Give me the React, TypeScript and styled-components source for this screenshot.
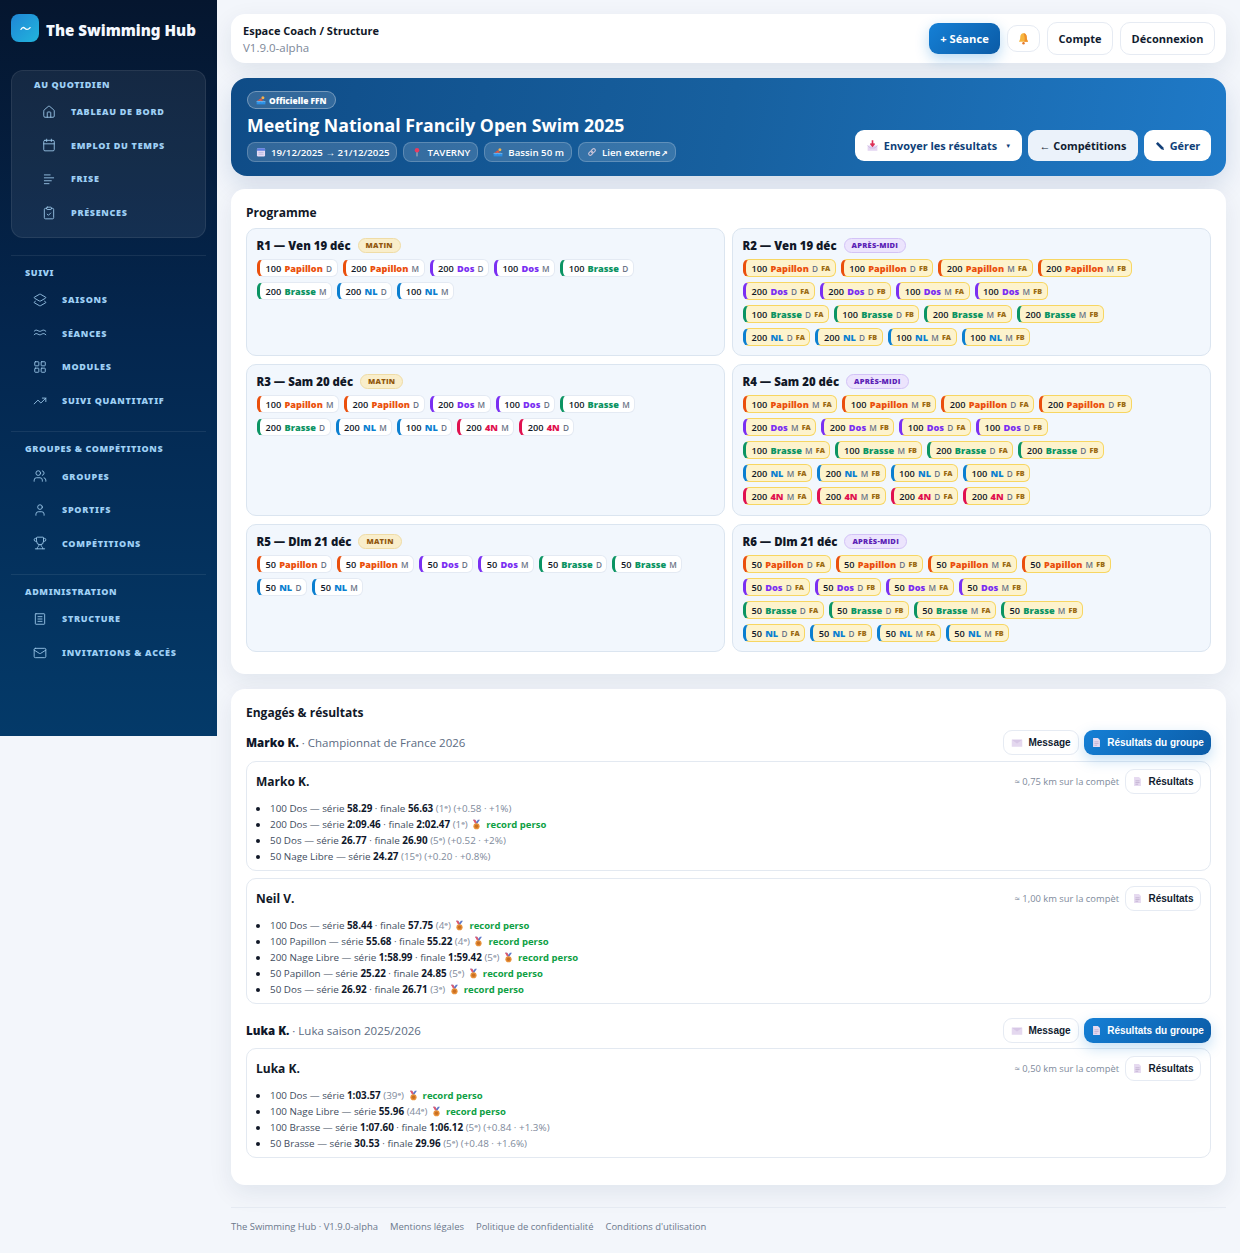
import React, { ComponentType, FC, ReactNode } from "react";
import styled, { createGlobalStyle } from "styled-components";
import {
  Home, Calendar, ClipboardCheck, Layers2, LayoutGrid, TrendingUp,
  Users, User, Trophy, Mail,
} from "lucide-react";

const GlobalStyle = createGlobalStyle`
  html, body { margin: 0; padding: 0; }
  body {
    background: #f3f6fb;
    font-family: "Open Sans", "Noto Sans", sans-serif;
    color: #0f172a;
  }
  * { box-sizing: border-box; }
`;

const strokeColours: Record<string, string> = {
  Papillon: "#ea4f0c",
  Dos: "#7a2ff2",
  Brasse: "#0b9463",
  NL: "#0b7fd0",
  "4N": "#e0114f",
};

const Page = styled.div`
  display: flex;
  align-items: flex-start;
  width: 1240px;
  height: 1253px;
  overflow: hidden;
`;

const Sidebar = styled.aside`
  width: 217px;
  height: 736px;
  flex-shrink: 0;
  padding: 14px 11px 0;
  background: linear-gradient(180deg, #05162f 0%, #04264e 45%, #043a69 100%);
`;

const Brand = styled.div`
  display: flex;
  align-items: center;
  gap: 7px;
  height: 28px;
  margin-bottom: 28px;
`;

const BrandMark = styled.div`
  width: 28px;
  height: 28px;
  border-radius: 8px;
  background: linear-gradient(135deg, #1f86d6, #22b5dc);
  display: flex;
  align-items: center;
  justify-content: center;
`;

const BrandName = styled.div`
  font-family: "Noto Sans", sans-serif;
  font-size: 15.1px;
  font-weight: 900;
  margin-top: 3px;
  color: #f4f8ff;
  white-space: nowrap;
`;

const FirstGroup = styled.div`
  height: 168px;
  padding: 7px 0 0 22px;
  border: 1px solid rgba(255, 255, 255, 0.08);
  border-radius: 12px;
  background: rgba(255, 255, 255, 0.065);
`;

const NavGroup = styled.div`
  margin-top: 17px;
  padding: 10px 0 0 14px;
  border-top: 1px solid rgba(255, 255, 255, 0.08);

  & + & {
    margin-top: 14px;
  }
`;

const NavLabel = styled.div`
  font-family: "Noto Sans", sans-serif;
  height: 14px;
  line-height: 14px;
  margin-bottom: 3px;
  font-size: 9px;
  font-weight: 900;
  letter-spacing: 0.6px;
  color: #9fd0f5;
  white-space: nowrap;
`;

const NavItem = styled.div`
  display: flex;
  align-items: center;
  height: 33.6px;
  padding-left: 7.5px;
  color: #9fd0f5;
  svg { flex-shrink: 0; }
`;

const NavIconSlot = styled.div`
  width: 29.5px;
  display: flex;
  color: #9ec9ec;
`;

const NavText = styled.span`
  font-family: "Noto Sans", sans-serif;
  font-size: 9px;
  font-weight: 900;
  letter-spacing: 0.7px;
  white-space: nowrap;
`;

const Main = styled.main`
  flex: 1;
  min-width: 0;
  padding: 14px 14px 0;
  display: flex;
  flex-direction: column;
`;

const TopBar = styled.header`
  height: 49px;
  padding: 0 11px 0 12px;
  background: #fff;
  border-radius: 14px;
  box-shadow: 0 8px 24px rgba(15, 40, 80, 0.09);
  display: flex;
  align-items: center;
  justify-content: space-between;
`;

const TopTitle = styled.div`
  font-size: 11px;
  line-height: 17px;
  font-weight: 700;
  color: #111827;
`;

const TopVersion = styled.div`
  font-size: 11.5px;
  line-height: 17px;
  color: #7c8798;
`;

const TopActions = styled.div`
  display: flex;
  align-items: center;
  gap: 7px;
`;

const PrimaryButton = styled.button`
  height: 31px;
  width: 71px;
  padding: 0;
  border: 0;
  border-radius: 9px;
  background: linear-gradient(135deg, #1580d6, #0b5ba6);
  box-shadow: 0 5px 14px rgba(21, 128, 214, 0.3);
  color: #fff;
  font: 700 11.2px "Open Sans", sans-serif;
`;

const GhostButton = styled.button<{ $w: number; $h?: number }>`
  width: ${(p) => p.$w}px;
  height: ${(p) => p.$h ?? 33}px;
  padding: 0;
  display: flex;
  align-items: center;
  justify-content: center;
  background: #fff;
  border: 1px solid #e6ebf3;
  border-radius: 10px;
  color: #111c30;
  font: 700 11px "Open Sans", sans-serif;
`;

const Hero = styled.section`
  height: 98px;
  margin-top: 15px;
  padding: 13px 15px 14px 16px;
  border-radius: 16px;
  background: linear-gradient(100deg, #0f4c87 0%, #17609f 50%, #1f7ac8 100%);
  box-shadow: 0 10px 26px rgba(15, 60, 120, 0.14);
  display: flex;
  justify-content: space-between;
  align-items: flex-end;
  color: #fff;
`;

const HeroInfo = styled.div`
  display: flex;
  flex-direction: column;
`;

const HeroBadge = styled.div`
  align-self: flex-start;
  height: 18px;
  padding: 0 8px;
  display: flex;
  align-items: center;
  gap: 3px;
  border: 1px solid rgba(255, 255, 255, 0.32);
  border-radius: 9px;
  background: rgba(255, 255, 255, 0.15);
  font-size: 8.4px;
  font-weight: 800;
`;

const HeroTitle = styled.h1`
  margin: 3px 0 4px;
  font-size: 17.7px;
  line-height: 26px;
  font-weight: 700;
  white-space: nowrap;
`;

const HeroChips = styled.div`
  display: flex;
  gap: 6px;
`;

const HeroChip = styled.div`
  height: 20px;
  padding: 0 7px 0 8px;
  display: flex;
  align-items: center;
  gap: 5px;
  border: 1px solid rgba(255, 255, 255, 0.2);
  border-radius: 8px;
  background: rgba(255, 255, 255, 0.15);
  font-size: 9.7px;
  font-weight: 600;
  white-space: nowrap;
`;

const ExternalArrow = styled.span`
  font-size: 8px;
  margin-left: -2px;
`;

const HeroActions = styled.div`
  display: flex;
  gap: 6px;
  align-items: center;
  margin-bottom: 1px;
`;

const HeroButton = styled.button<{ $w: number; $tint?: boolean; $navy?: boolean }>`
  width: ${(p) => p.$w}px;
  height: 31px;
  padding: 0;
  display: flex;
  align-items: center;
  justify-content: center;
  gap: 5px;
  border: 0;
  border-radius: 9px;
  background: ${(p) => (p.$tint ? "#ebf2fa" : "#fff")};
  color: ${(p) => (p.$navy ? "#0f3f78" : "#111c30")};
  font: 700 10.9px "Open Sans", sans-serif;
  white-space: nowrap;
`;

const Caret = styled.span`
  font-size: 6px;
  margin-left: 3px;
`;

const Card = styled.section<{ $h: number; $mt: number }>`
  height: ${(p) => p.$h}px;
  margin-top: ${(p) => p.$mt}px;
  padding: 14px 15px 0;
  background: #fff;
  border-radius: 14px;
  box-shadow: 0 8px 24px rgba(15, 40, 80, 0.08);
`;

const CardTitle = styled.h2`
  margin: 0;
  height: 20px;
  line-height: 20px;
  font-size: 12px;
  font-weight: 700;
  color: #111827;
`;

const SessionGrid = styled.div`
  margin-top: 5px;
  display: grid;
  grid-template-columns: 479px 479px;
  grid-template-rows: 128px 152px 128px;
  gap: 8px 7px;
`;

const Session = styled.div`
  padding: 8px 10px;
  background: #f2f7fd;
  border: 1px solid #dbe5f0;
  border-radius: 10px;
`;

const SessionHead = styled.div`
  display: flex;
  align-items: center;
  gap: 7px;
  height: 16px;
  margin-bottom: 6px;
`;

const SessionName = styled.div`
  font-size: 11.4px;
  font-weight: 800;
  color: #111827;
  white-space: nowrap;
  margin-left: -0.5px;
`;

const SessionTag = styled.span<{ $pm?: boolean }>`
  height: 15px;
  line-height: 13px;
  padding: 0 7px;
  border-radius: 8px;
  border: 1px solid ${(p) => (p.$pm ? "#d3c3f7" : "#efdca6")};
  background: ${(p) => (p.$pm ? "#ece4fd" : "#f9eecb")};
  color: ${(p) => (p.$pm ? "#5b21b6" : "#92580f")};
  font-size: 7.5px;
  font-weight: 800;
  letter-spacing: 0.25px;
`;

const ChipRows = styled.div`
  display: flex;
  flex-direction: column;
  gap: 5px;
`;

const ChipRow = styled.div`
  display: flex;
  gap: 5px;
`;

const Chip = styled.div<{ $colour: string; $final: boolean }>`
  height: 18px;
  padding: 0 4.5px 0 5.5px;
  display: flex;
  align-items: center;
  gap: 3.2px;
  border: 1px solid ${(p) => (p.$final ? "#f7d662" : "#e4eaf3")};
  border-left: 3px solid ${(p) => p.$colour};
  border-radius: 6px;
  background: ${(p) => (p.$final ? "#fdf3cd" : "#fff")};
  font-size: 9.2px;
  font-weight: 600;
  color: #111827;
  white-space: nowrap;
`;

const StrokeName = styled.span<{ $colour: string }>`
  color: ${(p) => p.$colour};
  font-weight: 800;
`;

const GenderMark = styled.span`
  font-size: 8.2px;
  color: #6b7486;
`;

const FinalMark = styled.span`
  font-size: 7.2px;
  font-weight: 800;
  color: #9a6a12;
`;

const GroupHead = styled.div<{ $mt: number }>`
  margin-top: ${(p) => p.$mt}px;
  height: 25px;
  display: flex;
  align-items: center;
  justify-content: space-between;
`;

const GroupTitle = styled.div`
  font-size: 11.5px;
  color: #5b6b82;
  b { color: #0f172a; font-weight: 800; }
`;

const GroupActions = styled.div`
  display: flex;
  gap: 5px;
`;

const SmallButton = styled.button<{ $w: number; $primary?: boolean }>`
  width: ${(p) => p.$w}px;
  height: 25px;
  padding: 0;
  display: flex;
  align-items: center;
  justify-content: center;
  gap: 5px;
  border: ${(p) => (p.$primary ? "0" : "1px solid #e6ebf3")};
  border-radius: 9px;
  background: ${(p) => (p.$primary ? "linear-gradient(135deg, #1580d6, #0b5ba6)" : "#fff")};
  box-shadow: ${(p) => (p.$primary ? "0 5px 14px rgba(21, 128, 214, 0.25)" : "none")};
  color: ${(p) => (p.$primary ? "#fff" : "#111c30")};
  font: 700 10px "Liberation Sans", "Open Sans", sans-serif;
  white-space: nowrap;
`;

const Athlete = styled.div<{ $h: number; $mt: number }>`
  height: ${(p) => p.$h}px;
  margin-top: ${(p) => p.$mt}px;
  padding: 7px 9px;
  border: 1px solid #e3e9f1;
  border-radius: 10px;
  background: #fff;
`;

const AthleteHead = styled.div`
  display: flex;
  align-items: center;
  justify-content: space-between;
  height: 25px;
`;

const AthleteName = styled.div`
  font-size: 12px;
  font-weight: 700;
  color: #111827;
`;

const AthleteMeta = styled.div`
  display: flex;
  align-items: center;
  gap: 6px;
  font-size: 9.4px;
  color: #7e8a9b;
`;

const ResultList = styled.ul`
  margin: 6px 0 0;
  padding: 0 0 0 14px;
  list-style: disc;
`;

const ResultRow = styled.li`
  height: 16px;
  line-height: 16px;
  font-size: 9.85px;
  color: #414c5e;
  white-space: nowrap;
  b { color: #0f172a; font-weight: 700; }
  &::marker { color: #111827; }
`;

const Rank = styled.span`
  color: #7e8a9b;
`;

const Record = styled.span`
  color: #0ea044;
  font-size: 9.5px;
  font-weight: 700;
`;

const MedalSlot = styled.span`
  display: inline-block;
  margin: 0 4px 0 1px;
  vertical-align: -2px;
`;

const Footer = styled.footer`
  margin-top: 22px;
  padding-top: 12px;
  border-top: 1px solid #e5eaf2;
  display: flex;
  gap: 12px;
  font-size: 9.45px;
  color: #6b788c;
`;

const Emoji: FC<{ size?: number; children: ReactNode }> = ({ size = 10, children }) => (
  <svg width={size} height={size} viewBox="0 0 16 16" style={{ flexShrink: 0 }}>{children}</svg>
);

const SwimIcon: FC = () => (
  <Emoji>
    <circle cx="11" cy="4.500" r="2.400" fill="#f6b04a" />
    <path d="M2 9l6-4 3 4z" fill="#e8553f" />
    <path d="M1 10h14v5H1z" fill="#2a8fe6" />
    <path d="M1 10.500c2-1.400 3 1.400 5 0s3 1.400 5 0 3 1 4 .3" stroke="#a9dcff" fill="none" />
  </Emoji>
);

const CalendarEmoji: FC = () => (
  <Emoji>
    <rect x="1.500" y="2" width="13" height="13" rx="2" fill="#e6dcf5" />
    <path d="M1.500 4a2 2 0 0 1 2-2h9a2 2 0 0 1 2 2v2h-13z" fill="#5c7de0" />
    <path d="M4 8.500h8M4 11.500h8" stroke="#9aa3cf" />
  </Emoji>
);

const PinEmoji: FC = () => (
  <Emoji>
    <path d="M8 8v7" stroke="#c9c2c8" strokeWidth="1.400" />
    <circle cx="8" cy="5" r="3.600" fill="#e83a5f" />
  </Emoji>
);

const LinkEmoji: FC = () => (
  <Emoji>
    <g fill="none" stroke="#c8c3d8" strokeWidth="1.800" transform="rotate(-45 8 8)">
      <rect x="1.500" y="5.500" width="7.500" height="5" rx="2.500" />
      <rect x="7" y="5.500" width="7.500" height="5" rx="2.500" />
    </g>
  </Emoji>
);

const BellEmoji: FC = () => (
  <Emoji size={13}>
    <path d="M8 1.500c-2.800 0-4 2.400-4 5 0 2.600-.8 4-1.600 5.500h11.200C12.800 10.500 12 9.100 12 6.500c0-2.600-1.200-5-4-5z" fill="#f7b53e" />
    <path d="M8 1.500c2.800 0 4 2.400 4 5 0 2.600.8 4 1.600 5.500H9c1-3 .5-7-1-10.500z" fill="#ee8f2d" />
    <circle cx="8" cy="13.800" r="1.500" fill="#e2762a" />
  </Emoji>
);

const TrayEmoji: FC = () => (
  <Emoji size={13}>
    <path d="M2 8h12v6.500H2z" fill="#e5d6f2" />
    <path d="M2 8l3 3h6l3-3" fill="none" stroke="#cdb8e2" />
    <path d="M8 1.500v6M5.500 5.500L8 8.500l2.500-3" stroke="#dc2f55" strokeWidth="2" fill="none" />
  </Emoji>
);

const PencilEmoji: FC = () => (
  <Emoji>
    <path d="M1.500 4.500L4.500 1.500 13 10 14.500 14.500 10 13z" fill="#123f78" />
  </Emoji>
);

const EnvelopeEmoji: FC = () => (
  <Emoji size={12}>
    <rect x="1" y="3.500" width="14" height="9.500" fill="#e4d8ef" />
    <path d="M1 3.500l7 5 7-5" fill="#d7c7e6" />
  </Emoji>
);

const MemoEmoji: FC = () => (
  <Emoji size={11}>
    <path d="M3 1.500h7l3 3v10H3z" fill="#e6daf0" />
    <path d="M5 7h6M5 9.500h6M5 12h4" stroke="#b7a6c9" />
  </Emoji>
);

const MedalEmoji: FC = () => (
  <Emoji size={11}>
    <path d="M3 1l4 6h2l4-6h-3L8 4 6 1z" fill="#5b78c9" />
    <path d="M3 1l3 6 2-2-2-4z" fill="#e6586a" />
    <circle cx="8" cy="10.500" r="4.500" fill="#e8913a" />
    <circle cx="8" cy="10.500" r="2.500" fill="#c96f22" />
  </Emoji>
);

type NavIconProps = { size?: number; strokeWidth?: number };

const lineIcon = (d: string): FC<NavIconProps> => ({ size = 14, strokeWidth = 1.5 }) => (
  <svg width={size} height={size} viewBox="0 0 24 24" fill="none" stroke="currentColor" strokeWidth={strokeWidth} strokeLinecap="round" strokeLinejoin="round">
    <path d={d} />
  </svg>
);

const FriseIcon = lineIcon("M4 5h10M4 10h16M4 15h12M4 20h8");
const WavesIcon = lineIcon("M2 9c2-2.500 4-2.500 6.500-1s4 1.500 6.500 0 4.500-1.500 7 1M2 15c2-2.500 4-2.500 6.500-1s4 1.500 6.500 0 4.500-1.500 7 1");
const StructureIcon = lineIcon("M5 3h14a1 1 0 0 1 1 1v16a1 1 0 0 1-1 1H5a1 1 0 0 1-1-1V4a1 1 0 0 1 1-1zM8.500 8h7M8.500 12h7M8.500 16h7");

type NavEntry = { label: string; icon: ComponentType<NavIconProps> };

const dailyNav: NavEntry[] = [
  { label: "TABLEAU DE BORD", icon: Home },
  { label: "EMPLOI DU TEMPS", icon: Calendar },
  { label: "FRISE", icon: FriseIcon },
  { label: "PRÉSENCES", icon: ClipboardCheck },
];

const navGroups: { title: string; items: NavEntry[] }[] = [
  {
    title: "SUIVI",
    items: [
      { label: "SAISONS", icon: Layers2 },
      { label: "SÉANCES", icon: WavesIcon },
      { label: "MODULES", icon: LayoutGrid },
      { label: "SUIVI QUANTITATIF", icon: TrendingUp },
    ],
  },
  {
    title: "GROUPES & COMPÉTITIONS",
    items: [
      { label: "GROUPES", icon: Users },
      { label: "SPORTIFS", icon: User },
      { label: "COMPÉTITIONS", icon: Trophy },
    ],
  },
  {
    title: "ADMINISTRATION",
    items: [
      { label: "STRUCTURE", icon: StructureIcon },
      { label: "INVITATIONS & ACCÈS", icon: Mail },
    ],
  },
];

const finals = (rows: string[][]) =>
  rows.map((row) => row.flatMap((e) => [`${e} FA`, `${e} FB`]));

const sessions: { name: string; pm?: boolean; rows: string[][] }[] = [
  {
    name: "R1 — Ven 19 déc",
    rows: [
      ["100 Papillon D", "200 Papillon M", "200 Dos D", "100 Dos M", "100 Brasse D"],
      ["200 Brasse M", "200 NL D", "100 NL M"],
    ],
  },
  {
    name: "R2 — Ven 19 déc",
    pm: true,
    rows: finals([
      ["100 Papillon D", "200 Papillon M"],
      ["200 Dos D", "100 Dos M"],
      ["100 Brasse D", "200 Brasse M"],
      ["200 NL D", "100 NL M"],
    ]),
  },
  {
    name: "R3 — Sam 20 déc",
    rows: [
      ["100 Papillon M", "200 Papillon D", "200 Dos M", "100 Dos D", "100 Brasse M"],
      ["200 Brasse D", "200 NL M", "100 NL D", "200 4N M", "200 4N D"],
    ],
  },
  {
    name: "R4 — Sam 20 déc",
    pm: true,
    rows: finals([
      ["100 Papillon M", "200 Papillon D"],
      ["200 Dos M", "100 Dos D"],
      ["100 Brasse M", "200 Brasse D"],
      ["200 NL M", "100 NL D"],
      ["200 4N M", "200 4N D"],
    ]),
  },
  {
    name: "R5 — Dim 21 déc",
    rows: [
      ["50 Papillon D", "50 Papillon M", "50 Dos D", "50 Dos M", "50 Brasse D", "50 Brasse M"],
      ["50 NL D", "50 NL M"],
    ],
  },
  {
    name: "R6 — Dim 21 déc",
    pm: true,
    rows: finals([
      ["50 Papillon D", "50 Papillon M"],
      ["50 Dos D", "50 Dos M"],
      ["50 Brasse D", "50 Brasse M"],
      ["50 NL D", "50 NL M"],
    ]),
  },
];

type Result = {
  event: string;
  heat: string;
  final?: string;
  rank: string;
  delta?: string;
};

const marko: Result[] = [
  { event: "100 Dos", heat: "58.29", final: "56.63", rank: "1ᵉ", delta: "+0.58 · +1%" },
  { event: "200 Dos", heat: "2:09.46", final: "2:02.47", rank: "1ᵉ" },
  { event: "50 Dos", heat: "26.77", final: "26.90", rank: "5ᵉ", delta: "+0.52 · +2%" },
  { event: "50 Nage Libre", heat: "24.27", rank: "15ᵉ", delta: "+0.20 · +0.8%" },
];

const neil: Result[] = [
  { event: "100 Dos", heat: "58.44", final: "57.75", rank: "4ᵉ" },
  { event: "100 Papillon", heat: "55.68", final: "55.22", rank: "4ᵉ" },
  { event: "200 Nage Libre", heat: "1:58.99", final: "1:59.42", rank: "5ᵉ" },
  { event: "50 Papillon", heat: "25.22", final: "24.85", rank: "5ᵉ" },
  { event: "50 Dos", heat: "26.92", final: "26.71", rank: "3ᵉ" },
];

const luka: Result[] = [
  { event: "100 Dos", heat: "1:03.57", rank: "39ᵉ" },
  { event: "100 Nage Libre", heat: "55.96", rank: "44ᵉ" },
  { event: "100 Brasse", heat: "1:07.60", final: "1:06.12", rank: "5ᵉ", delta: "+0.84 · +1.3%" },
  { event: "50 Brasse", heat: "30.53", final: "29.96", rank: "5ᵉ", delta: "+0.48 · +1.6%" },
];

const NavList: FC<{ items: NavEntry[] }> = ({ items }) => (
  <>
    {items.map(({ label, icon: Icon }) => (
      <NavItem key={label}>
        <NavIconSlot>
          <Icon size={14} strokeWidth={1.5} />
        </NavIconSlot>
        <NavText>{label}</NavText>
      </NavItem>
    ))}
  </>
);

const EventChip: FC<{ text: string }> = ({ text }) => {
  const [distance, stroke, gender, final] = text.split(" ");
  const colour = strokeColours[stroke];
  return (
    <Chip $colour={colour} $final={!!final}>
      <span>{distance}</span>
      <StrokeName $colour={colour}>{stroke}</StrokeName>
      <GenderMark>{gender}</GenderMark>
      {final && <FinalMark>{final}</FinalMark>}
    </Chip>
  );
};

const AthleteCard: FC<{ name: string; km: string; results: Result[]; h: number; mt: number }> = ({ name, km, results, h, mt }) => (
  <Athlete $h={h} $mt={mt}>
    <AthleteHead>
      <AthleteName>{name}</AthleteName>
      <AthleteMeta>
        ≈ {km} km sur la compèt
        <SmallButton $w={76}><MemoEmoji /> Résultats</SmallButton>
      </AthleteMeta>
    </AthleteHead>
    <ResultList>
      {results.map((r) => (
        <ResultRow key={r.event}>
          {r.event} — série <b>{r.heat}</b>
          {r.final && <> · finale <b>{r.final}</b></>}{" "}
          <Rank>({r.rank})</Rank>
          {r.delta ? (
            <Rank> ({r.delta})</Rank>
          ) : (
            <>
              {" "}
              <MedalSlot><MedalEmoji /></MedalSlot>
              <Record>record perso</Record>
            </>
          )}
        </ResultRow>
      ))}
    </ResultList>
  </Athlete>
);

const GroupHeader: FC<{ name: string; context: string; mt: number }> = ({ name, context, mt }) => (
  <GroupHead $mt={mt}>
    <GroupTitle><b>{name}</b> · {context}</GroupTitle>
    <GroupActions>
      <SmallButton $w={76}><EnvelopeEmoji /> Message</SmallButton>
      <SmallButton $w={127} $primary><MemoEmoji /> Résultats du groupe</SmallButton>
    </GroupActions>
  </GroupHead>
);

const App: FC = () => {
  return (
    <Page>
      <GlobalStyle />
      <Sidebar>
        <Brand>
          <BrandMark>
            <svg width="11" height="11" viewBox="0 0 24 24" fill="none" stroke="#fff" strokeWidth="2.800" strokeLinecap="round">
              <path d="M2 14c2.500-5 6-5 8.500-2.500S17 16 22 10" />
            </svg>
          </BrandMark>
          <BrandName>The Swimming Hub</BrandName>
        </Brand>
        <FirstGroup>
          <NavLabel>AU QUOTIDIEN</NavLabel>
          <NavList items={dailyNav} />
        </FirstGroup>
        {navGroups.map((group) => (
          <NavGroup key={group.title}>
            <NavLabel>{group.title}</NavLabel>
            <NavList items={group.items} />
          </NavGroup>
        ))}
      </Sidebar>

      <Main>
        <TopBar>
          <div>
            <TopTitle>Espace Coach / Structure</TopTitle>
            <TopVersion>V1.9.0-alpha</TopVersion>
          </div>
          <TopActions>
            <PrimaryButton>+ Séance</PrimaryButton>
            <GhostButton $w={33} $h={27}><BellEmoji /></GhostButton>
            <GhostButton $w={66}>Compte</GhostButton>
            <GhostButton $w={95}>Déconnexion</GhostButton>
          </TopActions>
        </TopBar>

        <Hero>
          <HeroInfo>
            <HeroBadge><SwimIcon /> Officielle FFN</HeroBadge>
            <HeroTitle>Meeting National Francily Open Swim 2025</HeroTitle>
            <HeroChips>
              <HeroChip><CalendarEmoji /> 19/12/2025 → 21/12/2025</HeroChip>
              <HeroChip><PinEmoji /> TAVERNY</HeroChip>
              <HeroChip><SwimIcon /> Bassin 50 m</HeroChip>
              <HeroChip><LinkEmoji /> <span>Lien externe <ExternalArrow>↗</ExternalArrow></span></HeroChip>
            </HeroChips>
          </HeroInfo>
          <HeroActions>
            <HeroButton $w={167} $navy><TrayEmoji /> Envoyer les résultats <Caret>▼</Caret></HeroButton>
            <HeroButton $w={110} $tint>← Compétitions</HeroButton>
            <HeroButton $w={67} $navy><PencilEmoji /> Gérer</HeroButton>
          </HeroActions>
        </Hero>

        <Card $h={485} $mt={13}>
          <CardTitle>Programme</CardTitle>
          <SessionGrid>
            {sessions.map((s) => (
              <Session key={s.name}>
                <SessionHead>
                  <SessionName>{s.name}</SessionName>
                  <SessionTag $pm={s.pm}>{s.pm ? "APRÈS-MIDI" : "MATIN"}</SessionTag>
                </SessionHead>
                <ChipRows>
                  {s.rows.map((row) => (
                    <ChipRow key={row[0]}>
                      {row.map((e) => <EventChip key={e} text={e} />)}
                    </ChipRow>
                  ))}
                </ChipRows>
              </Session>
            ))}
          </SessionGrid>
        </Card>

        <Card $h={496} $mt={15}>
          <CardTitle>Engagés &amp; résultats</CardTitle>
          <GroupHeader name="Marko K." context="Championnat de France 2026" mt={7} />
          <AthleteCard name="Marko K." km="0,75" results={marko} h={110} mt={6} />
          <AthleteCard name="Neil V." km="1,00" results={neil} h={126} mt={7} />
          <GroupHeader name="Luka K." context="Luka saison 2025/2026" mt={14} />
          <AthleteCard name="Luka K." km="0,50" results={luka} h={110} mt={5} />
        </Card>

        <Footer>
          <span>The Swimming Hub · V1.9.0-alpha</span>
          <span>Mentions légales</span>
          <span>Politique de confidentialité</span>
          <span>Conditions d'utilisation</span>
        </Footer>
      </Main>
    </Page>
  );
};

export default App;
